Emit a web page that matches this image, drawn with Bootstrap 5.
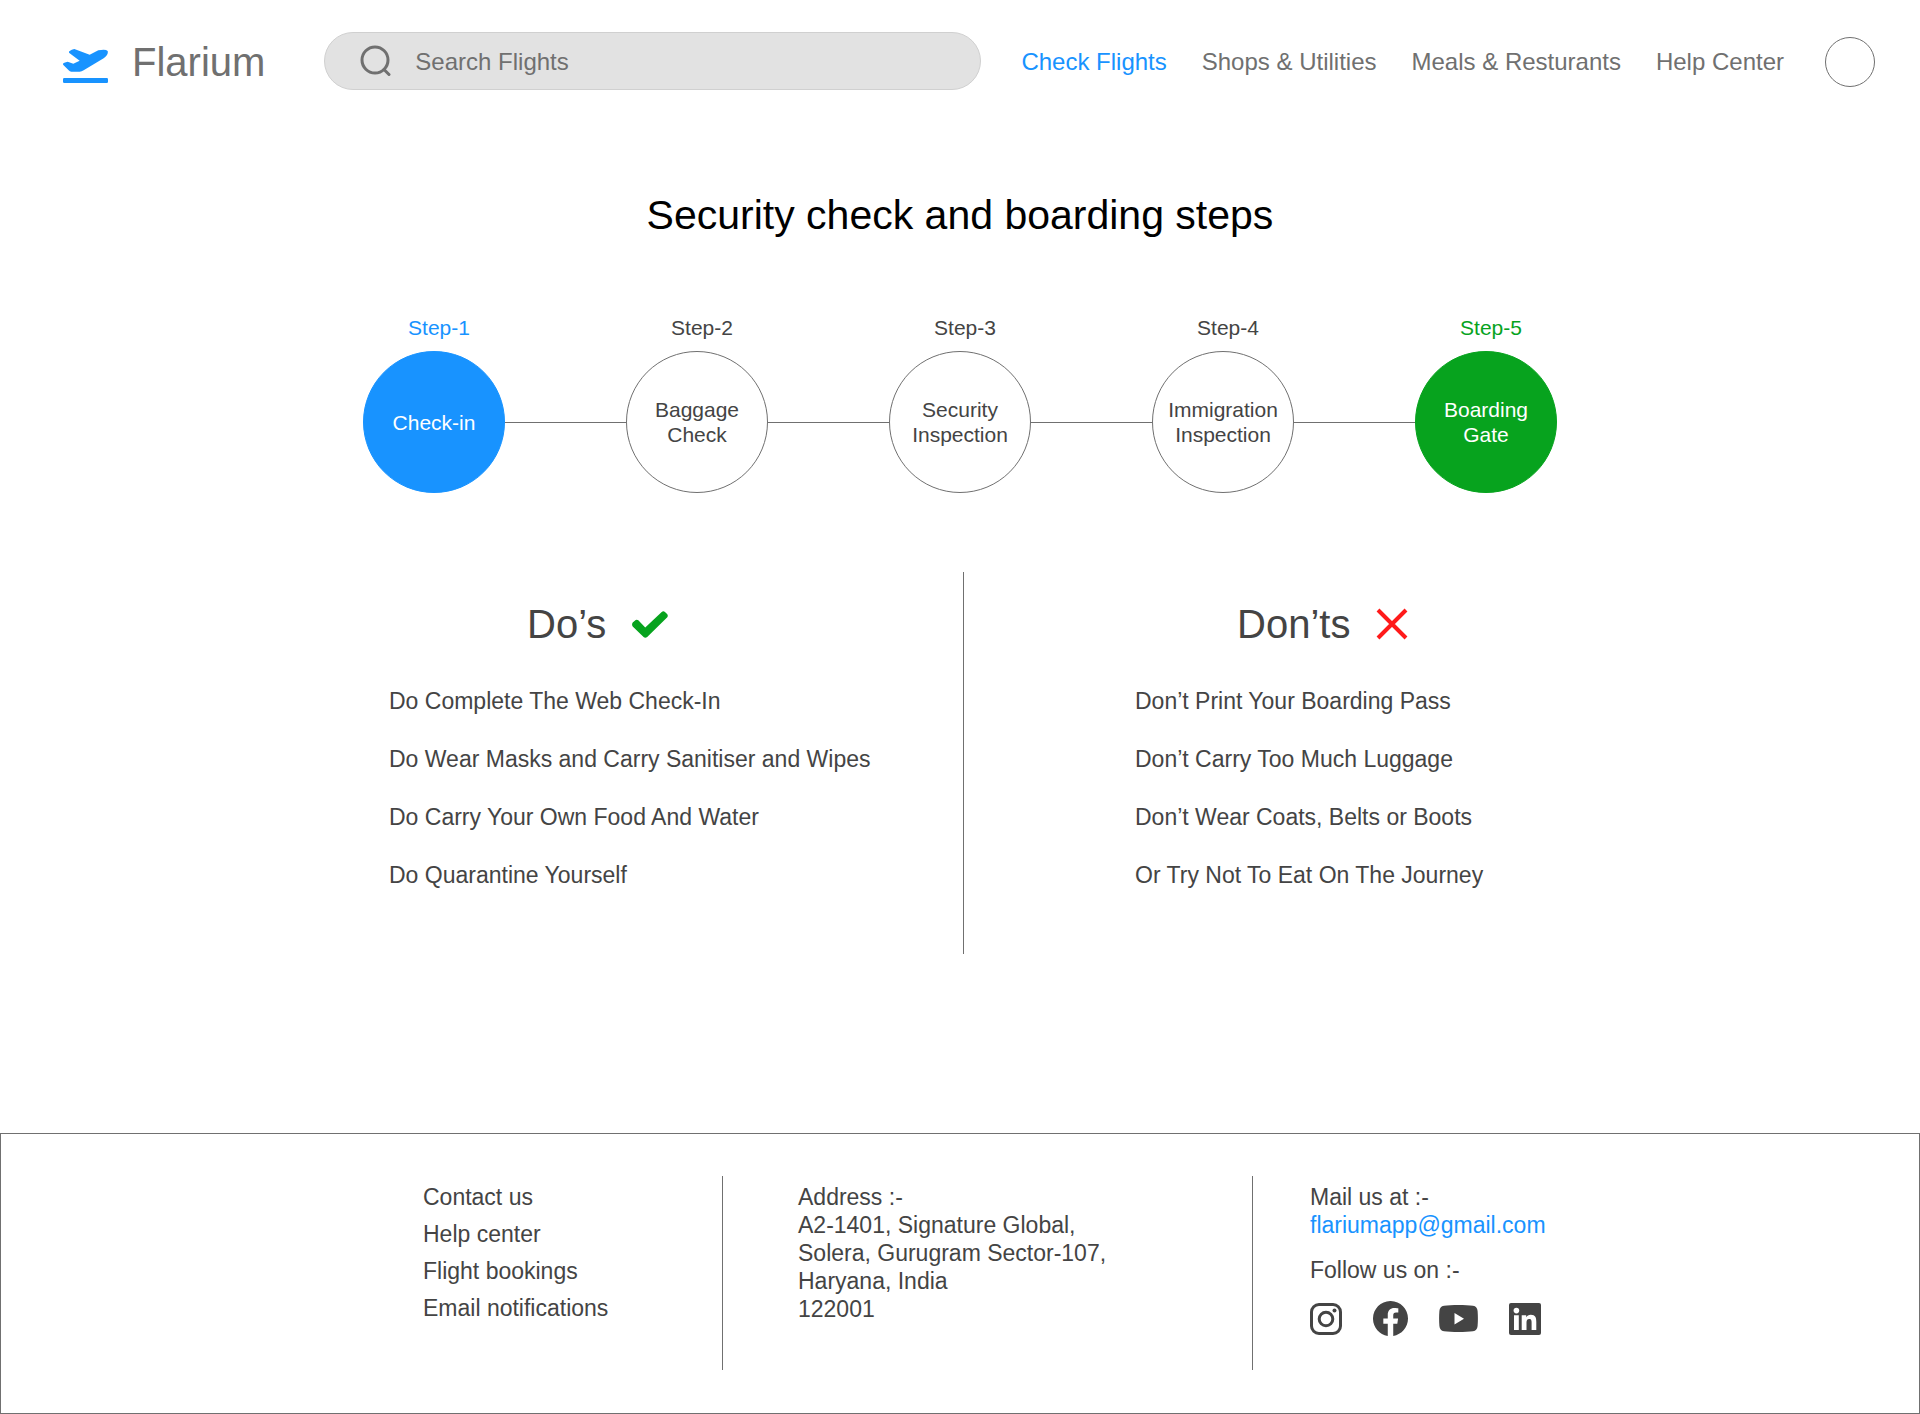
<!DOCTYPE html>
<html lang="en">
<head>
<meta charset="utf-8">
<meta name="viewport" content="width=device-width, initial-scale=1">
<title>Flarium</title>
<link href="https://cdn.jsdelivr.net/npm/bootstrap@5.3.0/dist/css/bootstrap.min.css" rel="stylesheet">
<style>
  :root { --fl-blue: #1893ff; --fl-green: #07a31e; --fl-grey: #707070; --fl-ink: #444; }
  body { font-family: "Liberation Sans", Arial, sans-serif; font-size: 23px; line-height: 28px; color: var(--fl-ink); background: #fff; }
  svg { display: block; flex: none; }
  a { color: inherit; text-decoration: none; }

  .site-header { padding: 32px 45px 0 63px; gap: 40px; font-size: 24px; }
  .brand { gap: 24px; font-size: 40px; line-height: 48px; color: var(--fl-grey); padding: 2px 19px 0 0; }
  .search-box { height: 58px; padding: 0 34px; gap: 24px; background: #e2e2e2; border: 1px solid #d0d0d0; min-width: 260px; }
  .search-box input { font-size: 24px; line-height: 28px; color: var(--fl-grey); outline: 0; padding: 2px 0 0; }
  .search-box input::placeholder { color: var(--fl-grey); opacity: 1; }
  .main-nav { gap: 35px; color: var(--fl-grey); padding-top: 2px; }
  .main-nav .active, .mail-link { color: var(--fl-blue); }
  .avatar { width: 50px; height: 50px; border: 1px solid var(--fl-grey); background: #fff; padding: 0; margin-left: 6px; }

  .page-title { font-size: 41px; line-height: 48px; color: #000; margin: 101px 0 76px; }
  .wrap { width: 100%; max-width: 1194px; margin-inline: auto; }

  .steps { font-size: 21px; line-height: 25px; }
  .step-label { padding-left: 10px; margin-bottom: 11px; }
  .step-dot { width: 142px; height: 142px; border: 1px solid var(--fl-grey); }
  .step-line { height: 1px; background: var(--fl-grey); margin-bottom: 70px; }
  .step-first .step-label { color: var(--fl-blue); }
  .step-last .step-label { color: var(--fl-green); }
  .step-first .step-dot { background: var(--fl-blue); border-color: var(--fl-blue); color: #fff; }
  .step-last .step-dot { background: var(--fl-green); border-color: var(--fl-green); color: #fff; }

  .advice { margin-top: 79px; margin-bottom: 179px; }
  .advice section { padding: 28px 0 65px; }
  .advice h2 { font-size: 40px; line-height: 48px; gap: 26px; margin-bottom: 39px; }
  .advice ul { gap: 30px; }
  .dos { flex: 0 0 601px; padding-left: 26px !important; border-right: 1px solid var(--fl-grey); }
  .dos h2 { padding-left: 138px; }
  .donts { padding-left: 171px !important; }
  .donts h2 { padding-left: 102px; }

  .site-footer { border: 1px solid var(--fl-grey); padding: 42px 0 43px; }
  .foot-part { padding: 7px 0 0; min-height: 194px; }
  .foot-part + .foot-part { border-left: 1px solid var(--fl-grey); }
  .foot-links { flex: 0 0 359px; padding-left: 60px; }
  .foot-links ul { gap: 9px; }
  .foot-address { flex: 0 0 530px; padding-left: 75px; line-height: 28px; }
  .foot-contact { padding-left: 57px; }
  .foot-contact p { margin: 17px 0; }
  .social { gap: 31px; }

  @media (max-width: 1500px) {
    .site-header { flex-wrap: wrap; padding-inline: 24px; }
  }
  @media (max-width: 1200px) {
    .steps, .advice, .foot-row, .main-nav { flex-wrap: wrap; justify-content: center; gap: 24px; }
    .step-line { display: none; }
    .dos, .foot-part + .foot-part { border: 0; }
    .dos, .donts, .foot-part { flex: 0 1 auto; padding-left: 24px !important; }
    .advice h2 { padding-left: 0; }
  }
</style>
<script src="https://cdn.jsdelivr.net/npm/bootstrap@5.3.0/dist/js/bootstrap.bundle.min.js"></script>
</head>
<body>

<header class="site-header d-flex align-items-center">
  <a class="brand d-flex align-items-center" href="#">
    <svg class="mt-2" width="45" height="34" viewBox="0 0 135 102" fill="#1893ff" aria-hidden="true"><path d="M20 6Q26 1 34 0L80 17 106 4Q128-1 134 6 137 16 122 28L62 64Q56 68 50 68H25Q20 68 17 64L1 48Q-2 43 4 41L14 38 31 44 50 35 19 12Q16 8 20 6Z"/><rect y="87" width="135" height="15" rx="4"/></svg>
    <span>Flarium</span>
  </a>
  <form class="search-box d-flex align-items-center flex-grow-1 rounded-pill" role="search">
    <svg width="32" height="32" viewBox="0 0 32 32" fill="none" stroke="#707070" stroke-width="3" stroke-linecap="round" aria-hidden="true"><circle cx="16" cy="15" r="13"/><path d="M25 24.500 30 29.500"/></svg>
    <input class="border-0 bg-transparent flex-grow-1 w-100" type="search" placeholder="Search Flights" aria-label="Search Flights">
  </form>
  <nav class="main-nav d-flex align-items-center text-nowrap" aria-label="Main">
    <a class="active" href="#" aria-current="page">Check Flights</a>
    <a href="#">Shops &amp; Utilities</a>
    <a href="#">Meals &amp; Resturants</a>
    <a href="#">Help Center</a>
    <button class="avatar rounded-circle" type="button" aria-label="Account"></button>
  </nav>
</header>

<main>
  <h1 class="page-title text-center fw-normal">Security check and boarding steps</h1>

  <div class="steps wrap d-flex align-items-end text-center">
    <div class="step-first"><div class="step-label">Step-1</div><div class="step-dot rounded-circle d-flex align-items-center justify-content-center">Check-in</div></div>
    <div class="step-line flex-grow-1"></div>
    <div><div class="step-label">Step-2</div><div class="step-dot rounded-circle d-flex align-items-center justify-content-center">Baggage<br>Check</div></div>
    <div class="step-line flex-grow-1"></div>
    <div><div class="step-label">Step-3</div><div class="step-dot rounded-circle d-flex align-items-center justify-content-center">Security<br>Inspection</div></div>
    <div class="step-line flex-grow-1"></div>
    <div><div class="step-label">Step-4</div><div class="step-dot rounded-circle d-flex align-items-center justify-content-center">Immigration<br>Inspection</div></div>
    <div class="step-line flex-grow-1"></div>
    <div class="step-last"><div class="step-label">Step-5</div><div class="step-dot rounded-circle d-flex align-items-center justify-content-center">Boarding<br>Gate</div></div>
  </div>

  <div class="advice wrap d-flex">
    <section class="dos">
      <h2 class="fw-normal d-flex align-items-center">Do’s
        <svg width="36" height="27" viewBox="0 0 109 82" fill="#07a31e" aria-hidden="true"><path d="M2 35 11 27Q15 25 19 28L40 50 90 3Q95-1 100 3L107 10Q110 15 107 19L46 79Q40 84 35 79L2 47Q-2 41 2 35Z"/></svg>
      </h2>
      <ul class="list-unstyled d-flex flex-column mb-0">
        <li>Do Complete The Web Check-In</li>
        <li>Do Wear Masks and Carry Sanitiser and Wipes</li>
        <li>Do Carry Your Own Food And Water</li>
        <li>Do Quarantine Yourself</li>
      </ul>
    </section>
    <section class="donts">
      <h2 class="fw-normal d-flex align-items-center">Don’ts
        <svg width="32" height="32" viewBox="0 0 32 32" fill="none" stroke="#ff1a1a" stroke-width="4" aria-hidden="true"><path d="M2 2 30 30M30 2 2 30"/></svg>
      </h2>
      <ul class="list-unstyled d-flex flex-column mb-0">
        <li>Don’t Print Your Boarding Pass</li>
        <li>Don’t Carry Too Much Luggage</li>
        <li>Don’t Wear Coats, Belts or Boots</li>
        <li>Or Try Not To Eat On The Journey</li>
      </ul>
    </section>
  </div>
</main>

<footer class="site-footer">
  <div class="foot-row wrap d-flex">
    <div class="foot-part foot-links">
      <ul class="list-unstyled d-flex flex-column mb-0">
        <li><a href="#">Contact us</a></li>
        <li><a href="#">Help center</a></li>
        <li><a href="#">Flight bookings</a></li>
        <li><a href="#">Email notifications</a></li>
      </ul>
    </div>
    <address class="foot-part foot-address mb-0">Address :-<br>A2-1401, Signature Global,<br>Solera, Gurugram Sector-107,<br>Haryana, India<br>122001</address>
    <div class="foot-part foot-contact">
      <div>Mail us at :-</div>
      <a class="mail-link d-block" href="mailto:flariumapp@gmail.com">flariumapp@gmail.com</a>
      <p>Follow us on :-</p>
      <div class="social d-flex align-items-center">
        <a href="#" aria-label="Instagram"><svg width="32" height="32" viewBox="0 0 32 32" fill="none" stroke="#444" stroke-width="3"><rect x="1.500" y="1.500" width="29" height="29" rx="7.500"/><circle cx="16" cy="16" r="6.800"/><circle cx="24.500" cy="7.500" r="2" fill="#444" stroke="none"/></svg></a>
        <a href="#" aria-label="Facebook"><svg width="35" height="35" viewBox="0 0 16 16" fill="#444"><path d="M16 8.049c0-4.446-3.582-8.050-8-8.050C3.580 0-.002 3.603-.002 8.050c0 4.017 2.926 7.347 6.750 7.951v-5.625h-2.030V8.050H6.750V6.275c0-2.017 1.195-3.131 3.022-3.131.876 0 1.791.157 1.791.157v1.980h-1.009c-.993 0-1.303.621-1.303 1.258v1.510h2.218l-.354 2.326H9.250V16c3.824-.604 6.750-3.934 6.750-7.951z"/></svg></a>
        <a href="#" aria-label="YouTube"><svg width="39" height="27" viewBox="0 0 39 27" fill="#444"><path fill-rule="evenodd" d="M5 .8C12-.2 27-.2 34 .8 37 1.200 38.300 3 38.600 6c.4 5 .4 10 0 15-.3 3-1.600 4.800-4.600 5.200-7 1-22 1-29 0C2 25.800.7 24 .4 21 0 16 0 11 .4 6 .7 3 2 1.200 5 .8ZM15.500 8v11.500l9.500-5.700Z"/></svg></a>
        <a href="#" aria-label="LinkedIn"><svg width="32" height="32" viewBox="0 0 32 32"><rect width="32" height="32" rx="2" fill="#444"/><g fill="#fff"><circle cx="7.400" cy="7.600" r="2.800"/><path d="M5 12.200h4.800V27H5zM12.700 12.200h4.500v2c.8-1.400 2.400-2.400 4.600-2.400 4.700 0 5.500 3.100 5.500 7.100V27h-4.700v-7.200c0-1.700 0-3.900-2.400-3.900s-2.700 1.900-2.700 3.800V27h-4.800z"/></g></svg></a>
      </div>
    </div>
  </div>
</footer>
</body>
</html>
